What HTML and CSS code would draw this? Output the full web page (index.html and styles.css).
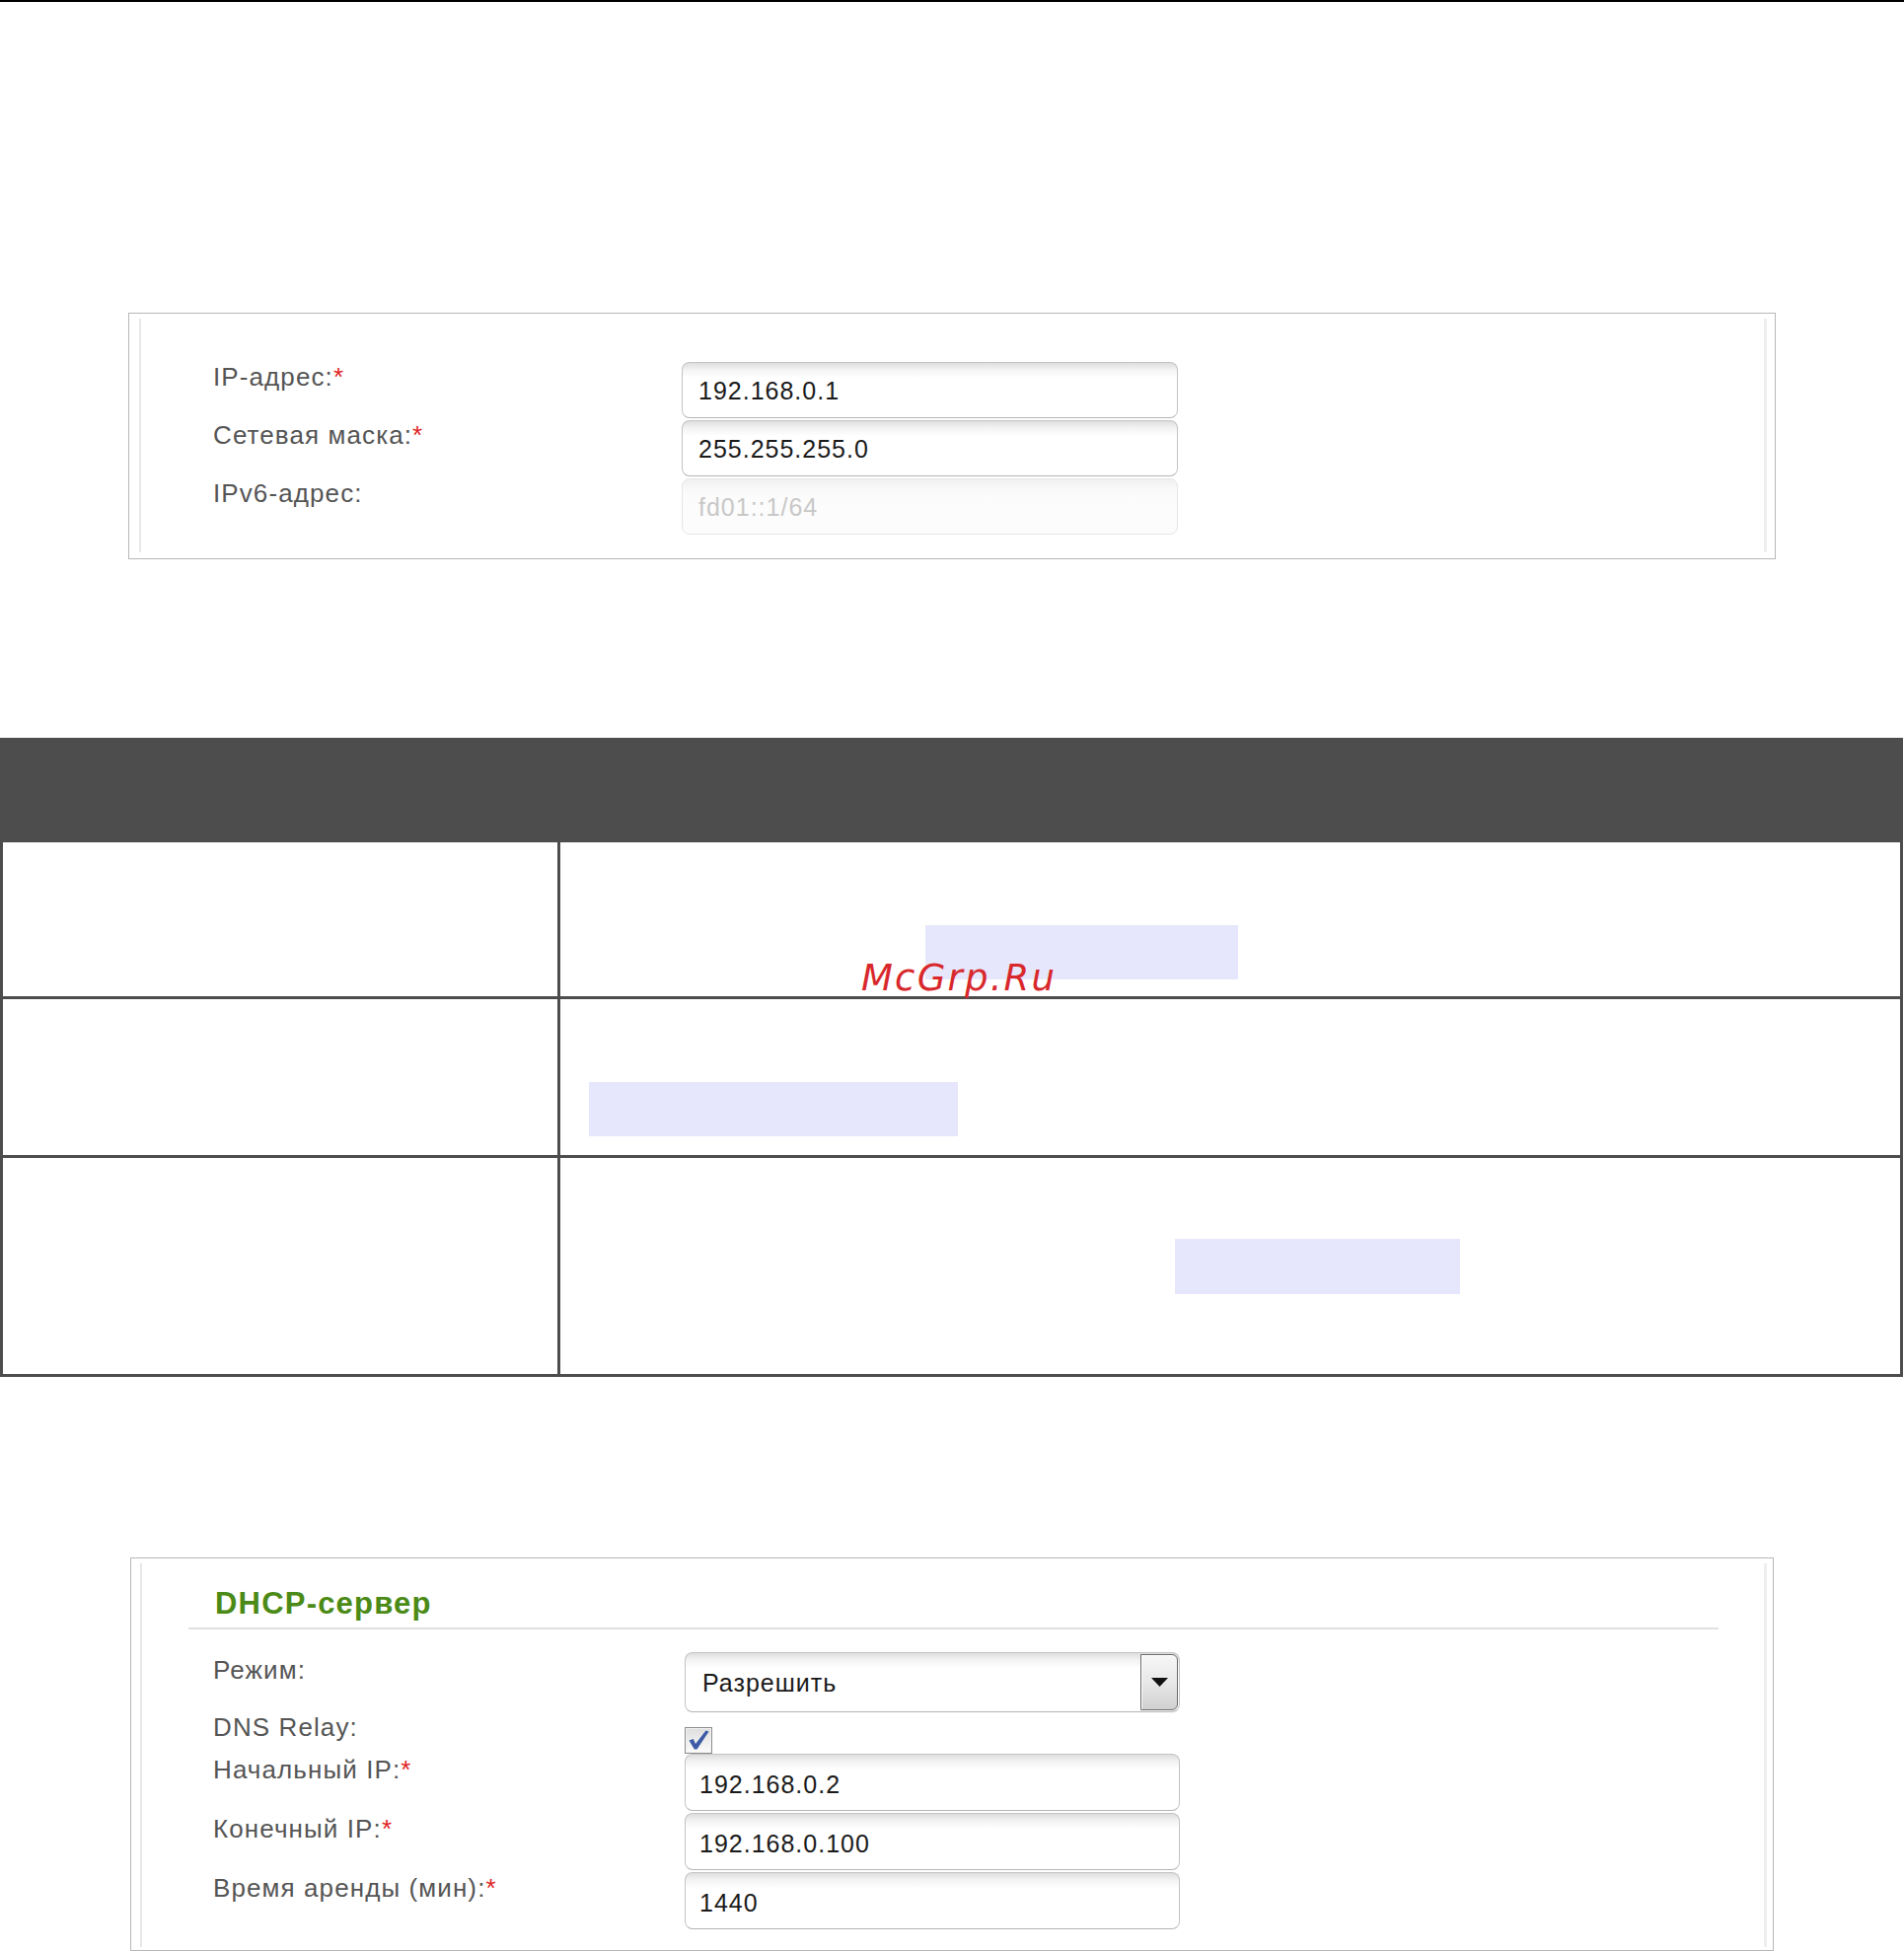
FILE: index.html
```html
<!DOCTYPE html>
<html lang="ru">
<head>
<meta charset="utf-8">
<title>LAN / DHCP</title>
<link rel="stylesheet" href="styles.css">
</head>
<body>
<div class="topline"></div>

<section class="panel panel-lan">
  <div class="panel-inner lan-inner">
    <div class="form-row">
      <label class="lbl">IP-адрес:<span class="req">*</span></label>
      <input class="field" type="text" value="192.168.0.1">
    </div>
    <div class="form-row">
      <label class="lbl">Сетевая маска:<span class="req">*</span></label>
      <input class="field" type="text" value="255.255.255.0">
    </div>
    <div class="form-row">
      <label class="lbl">IPv6-адрес:</label>
      <input class="field field-disabled" type="text" value="fd01::1/64" disabled>
    </div>
  </div>
</section>

<div class="tbl">
  <div class="thead"></div>
  <div class="trow r1">
    <div class="tc-left"></div>
    <div class="tc-right"><span class="hl hl1"></span></div>
  </div>
  <div class="trow r2">
    <div class="tc-left"></div>
    <div class="tc-right"><span class="hl hl2"></span></div>
  </div>
  <div class="trow r3">
    <div class="tc-left"></div>
    <div class="tc-right"><span class="hl hl3"></span></div>
  </div>
  <div class="watermark">McGrp.Ru</div>
</div>

<section class="panel panel-dhcp">
  <div class="panel-inner dhcp-inner">
    <h2 class="ptitle">DHCP-сервер</h2>
    <div class="psep"></div>
    <div class="dhcp-rows">
      <div class="form-row row-select">
        <label class="lbl lbl-select">Режим:</label>
        <div class="select">
          <span class="select-text">Разрешить</span>
          <span class="select-btn">
            <svg width="17" height="9" viewBox="0 0 17 9"><polygon points="0,0 17,0 8.5,9" fill="#111"/></svg>
          </span>
        </div>
      </div>
      <div class="form-row row-check">
        <label class="lbl">DNS Relay:</label>
        <span class="checkbox">
          <svg width="26" height="25" viewBox="0 0 26 25"><path d="M3.5 12.5 L7.8 11 L10 16 L20.5 2.5 L23.5 3.5 L11.5 21.5 L8.8 21.5 Z" fill="#3d5aa6"/></svg>
        </span>
      </div>
      <div class="form-row row-input">
        <label class="lbl lbl-input">Начальный IP:<span class="req">*</span></label>
        <input class="field field-d" type="text" value="192.168.0.2">
      </div>
      <div class="form-row row-input">
        <label class="lbl lbl-input">Конечный IP:<span class="req">*</span></label>
        <input class="field field-d" type="text" value="192.168.0.100">
      </div>
      <div class="form-row row-input">
        <label class="lbl lbl-input">Время аренды (мин):<span class="req">*</span></label>
        <input class="field field-d" type="text" value="1440">
      </div>
    </div>
  </div>
</section>
</body>
</html>
```

FILE: styles.css
```css
html, body {
  margin: 0;
  padding: 0;
  background: #ffffff;
}

body {
  font-family: "Liberation Sans", Arial, sans-serif;
  color: #222;
  width: 1930px;
  overflow: hidden;
}

.topline {
  height: 2px;
  background: #000;
}

/* panels */
.panel {
  box-sizing: border-box;
  border: 1px solid #b7b7b7;
}

.panel-lan {
  margin-top: 315px;
  margin-left: 130px;
  width: 1670px;
  height: 250px;
  padding: 5px 8px 6px 10px;
}

.panel-inner {
  box-sizing: border-box;
  border-left: 2px solid #e8e8e8;
  border-right: 3px solid #eeeeee;
}

.lan-inner {
  height: 237px;
  padding-top: 44px;
  padding-left: 73px;
}

.form-row {
  display: flex;
  align-items: flex-start;
}

.lbl {
  display: block;
  width: 475px;
  flex: none;
  font-size: 26px;
  line-height: 30px;
  letter-spacing: 1.1px;
  color: #555555;
}

.req {
  color: #e02424;
  letter-spacing: 0;
}

.field {
  box-sizing: border-box;
  display: block;
  width: 503px;
  height: 57px;
  margin: 0 0 2px 0;
  padding: 1px 14px 0 16px;
  border: 1px solid #c4c4c4;
  border-bottom-color: #b4b4b4;
  border-radius: 8px;
  background: linear-gradient(to bottom, #dedede 0px, #f3f3f3 7px, #ffffff 15px);
  font-family: "Liberation Sans", Arial, sans-serif;
  font-size: 25px;
  letter-spacing: 1px;
  color: #1a1a1a;
  outline: none;
}

.field-disabled {
  border-color: #e6e6e6;
  background: linear-gradient(to bottom, #f0f0f0 0px, #f9f9f9 10px, #fcfcfc 20px);
  color: #c8c8c8;
  -webkit-text-fill-color: #c8c8c8;
  opacity: 1;
}

/* table */
.tbl {
  position: relative;
  box-sizing: border-box;
  width: 1929px;
  margin-top: 181px;
  border-left: 3px solid #4d4d4d;
  border-right: 3px solid #4d4d4d;
  border-bottom: 3px solid #4d4d4d;
}

.thead {
  height: 106px;
  background: #4d4d4d;
}

.trow {
  display: grid;
  grid-template-columns: 565px 1fr;
}

.r1 { height: 156px; }
.r2 { height: 158px; border-top: 3px solid #4d4d4d; }
.r3 { height: 219px; border-top: 3px solid #4d4d4d; }

.tc-left {
  border-right: 3px solid #4d4d4d;
}

.tc-right {
  overflow: hidden;
}

.hl {
  display: block;
  background: #e6e6fc;
}

.hl1 { width: 317px; height: 55px; margin: 84px 0 0 370px; }
.hl2 { width: 374px; height: 55px; margin: 84px 0 0 29px; }
.hl3 { width: 289px; height: 56px; margin: 82px 0 0 623px; }

.watermark {
  position: absolute;
  left: 870px;
  top: 225px;
  font-family: "DejaVu Sans", sans-serif;
  font-style: italic;
  font-size: 37px;
  line-height: 37px;
  letter-spacing: 2.2px;
  color: #d8282c;
  white-space: nowrap;
}

/* DHCP panel */
.panel-dhcp {
  margin-top: 183px;
  margin-left: 132px;
  width: 1666px;
  height: 399px;
  padding: 5px 6px 3px 9px;
}

.dhcp-inner {
  height: 100%;
  padding-top: 23px;
}

.ptitle {
  margin: 0 0 0 74px;
  font-size: 31px;
  line-height: 36px;
  font-weight: bold;
  letter-spacing: 1.2px;
  color: #4b8a16;
}

.psep {
  margin: 6px 0 0 47px;
  width: 1551px;
  height: 2px;
  background: #e0e0e0;
}

.dhcp-rows {
  padding-left: 72px;
  padding-top: 23px;
}

.dhcp-rows .lbl {
  width: 478px;
}

.lbl-select { margin-top: 3px; }
.lbl-input { margin-top: 1px; }

.select {
  box-sizing: border-box;
  display: flex;
  width: 502px;
  height: 61px;
  border: 1px solid #c4c4c4;
  border-bottom-color: #b4b4b4;
  border-radius: 8px;
  background: linear-gradient(to bottom, #dedede 0px, #f3f3f3 7px, #ffffff 15px);
}

.select-text {
  flex: 1;
  padding: 15px 0 0 17px;
  font-size: 25px;
  line-height: 30px;
  letter-spacing: 1px;
  color: #1a1a1a;
}

.select-btn {
  box-sizing: border-box;
  width: 38px;
  margin: 1px 1px 1px 0;
  display: flex;
  align-items: center;
  justify-content: center;
  border: 1px solid #6a6a6a;
  border-radius: 0 6px 6px 0;
  background: linear-gradient(to bottom, #f7f7f7 0%, #e8e8e8 50%, #d0d0d0 100%);
  box-shadow: inset 1px 1px 0 #ffffff;
}

.row-check {
  height: 42px;
}

.checkbox {
  box-sizing: border-box;
  display: block;
  width: 28px;
  height: 27px;
  margin-top: 15px;
  border: 1px solid #8c8c8c;
  background: linear-gradient(to bottom, #dedede, #fbfbfb);
  box-shadow: inset 0 0 0 1px #f4f4f4;
  position: relative;
  z-index: 1;
}

.checkbox svg {
  display: block;
  margin: 0;
}

.field-d {
  width: 502px;
  height: 58px;
  padding-top: 4px;
  padding-left: 14px;
}
```
